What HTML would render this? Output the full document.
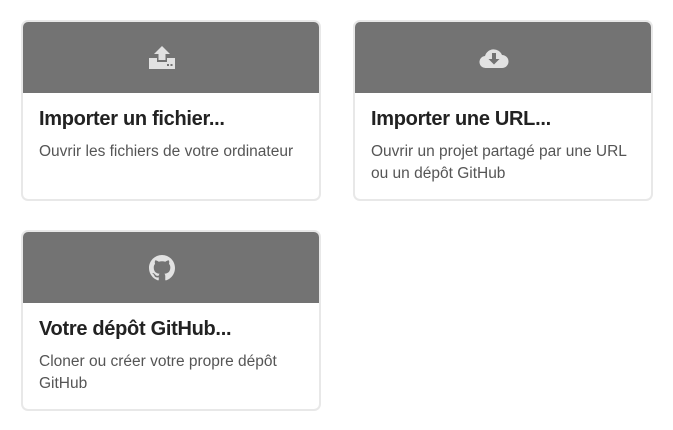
<!DOCTYPE html><html><head><style>
body{margin:0;width:673px;height:430px;background:#fff;font-family:"Liberation Sans",sans-serif;position:relative;overflow:hidden}
.c{position:absolute;width:296px;height:177px;border:2px solid #e8e8e8;border-radius:7px;overflow:hidden;background:#fff}
.h{height:71px;background:#737373;display:flex;align-items:center;justify-content:center;padding-right:18px}
.t{position:absolute;left:16px;top:86px;font-size:20px;font-weight:bold;color:#222;letter-spacing:-0.3px}
.d{position:absolute;left:16px;top:119px;font-size:15.5px;color:#555;line-height:22px;width:270px}
</style></head><body>
<div class="c" style="left:21px;top:20px"><div class="h"><svg width="28" height="26" viewBox="0 0 28 26" fill="#e2e2e2"><path d="M14 1 L22 9 H17.5 V15 H10.5 V9 H6 Z"/><path d="M1 13 H9 V17 H19 V13 H27 V24 H1 Z"/><rect x="19" y="19" width="2" height="2" fill="#737373"/><rect x="22.5" y="19" width="2" height="2" fill="#737373"/></svg></div><div class="t">Importer un fichier...</div><div class="d">Ouvrir les fichiers de votre ordinateur</div></div>
<div class="c" style="left:353px;top:20px"><div class="h"><svg width="30" height="22" viewBox="0 0 30 22"><path fill="#e2e2e2" d="M7 21 A6 6 0 0 1 6 9 A9 9 0 0 1 23 8 A6.5 6.5 0 0 1 23 21 Z"/><path fill="#737373" d="M13 6 H17 V12 H20.5 L15 17.5 L9.5 12 H13 Z"/></svg></div><div class="t">Importer une URL...</div><div class="d">Ouvrir un projet partagé par une URL ou un dépôt GitHub</div></div>
<div class="c" style="left:21px;top:230px"><div class="h"><svg width="26" height="26" viewBox="0 0 16 16"><path fill="#e2e2e2" d="M8 0C3.58 0 0 3.580 0 8c0 3.54 2.29 6.53 5.47 7.59.4.07.55-.17.55-.38 0-.19-.01-.82-.01-1.49-2.010.37-2.530-.49-2.690-.94-.09-.23-.48-.94-.82-1.13-.28-.15-.68-.52-.01-.53.63-.01 1.080.58 1.230.82.72 1.210 1.870.87 2.330.66.07-.52.28-.87.51-1.070-1.780-.2-3.640-.89-3.640-3.950 0-.87.31-1.590.82-2.150-.08-.2-.36-1.020.08-2.120 0 0 .67-.21 2.200.82.64-.18 1.320-.27 2-.27.68 0 1.360.09 2 .27 1.530-1.040 2.200-.82 2.200-.82.44 1.100.16 1.920.08 2.120.51.56.82 1.270.82 2.150 0 3.070-1.870 3.750-3.650 3.950.29.25.54.73.54 1.480 0 1.070-.01 1.930-.01 2.200 0 .21.15.46.55.38A8.013 8.013 0 0016 8c0-4.420-3.580-8-8-8z"/></svg></div><div class="t">Votre dépôt GitHub...</div><div class="d">Cloner ou créer votre propre dépôt GitHub</div></div>
</body></html>
